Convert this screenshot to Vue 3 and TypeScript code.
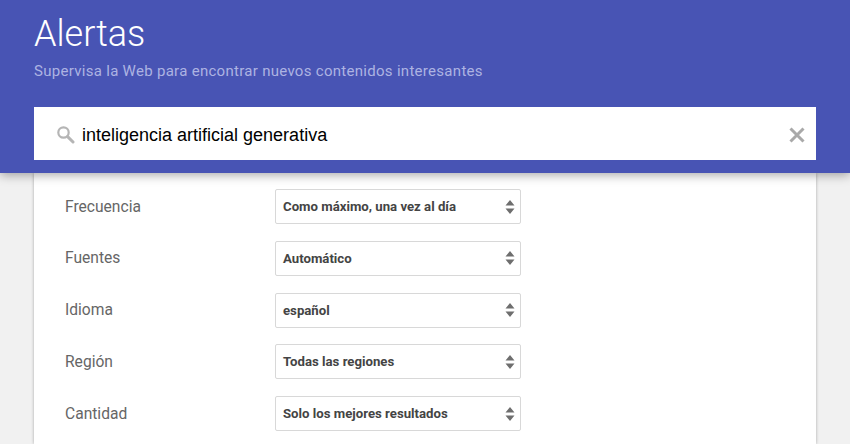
<script setup lang="ts">
const rows: { label: string; value: string }[] = [
  { label: 'Frecuencia', value: 'Como máximo, una vez al día' },
  { label: 'Fuentes', value: 'Automático' },
  { label: 'Idioma', value: 'español' },
  { label: 'Región', value: 'Todas las regiones' },
  { label: 'Cantidad', value: 'Solo los mejores resultados' },
]
</script>

<template>
  <div class="page">
    <header class="header">
      <h1 class="title">Alertas</h1>
      <p class="subtitle">Supervisa la Web para encontrar nuevos contenidos interesantes</p>
      <div class="search">
        <svg class="search-icon" width="19" height="19" viewBox="0 0 19 19" fill="none">
          <circle cx="7.5" cy="7.5" r="5.2" stroke="#b5b5b5" stroke-width="2.2" />
          <path d="M11.6 11.6 L17 17" stroke="#b5b5b5" stroke-width="3" stroke-linecap="round" />
        </svg>
        <span class="query">inteligencia artificial generativa</span>
        <svg class="clear" width="16" height="16" viewBox="0 0 16 16" fill="none">
          <path d="M1.5 1.5 L14.5 14.5 M14.5 1.5 L1.5 14.5" stroke="#a9a9a9" stroke-width="3" />
        </svg>
      </div>
    </header>
    <main class="card">
      <div v-for="row in rows" :key="row.label" class="row">
        <span class="label">{{ row.label }}</span>
        <div class="select">
          <span>{{ row.value }}</span>
          <svg class="arrows" width="10" height="14" viewBox="0 0 10 14">
            <path d="M5 0 L9.5 5.5 H0.5 Z M5 14 L0.5 8.5 H9.5 Z" fill="#6e6e6e" />
          </svg>
        </div>
      </div>
    </main>
  </div>
</template>

<style>
html, body { margin: 0; background: #f1f1f1; }
</style>

<style scoped>
.page {
  height: 444px;
  overflow: hidden;
  background: #f1f1f1;
  font-family: Roboto, sans-serif;
}
.header {
  position: relative;
  z-index: 1;
  box-sizing: border-box;
  height: 173px;
  padding: 13px 34px 0;
  background: #4854b4;
  box-shadow: 0 2px 10px rgba(0, 0, 0, 0.35);
}
.title {
  margin: 0;
  font-size: 36px;
  line-height: 42px;
  font-weight: 300;
  color: #fff;
}
.subtitle {
  margin: 6px 0 0;
  font-size: 15px;
  line-height: 20px;
  letter-spacing: 0.29px;
  color: #adb3e2;
}
.search {
  box-sizing: border-box;
  display: flex;
  align-items: center;
  height: 53px;
  margin-top: 26px;
  padding: 2px 11px 0 22px;
  background: #fff;
}
.search-icon { flex: none; margin-right: 7px; }
.query {
  flex: 1;
  padding-top: 1px;
  font-family: "Liberation Sans", Arial, sans-serif;
  font-size: 18px;
  color: #000;
}
.clear { flex: none; }
.card {
  box-sizing: border-box;
  width: 782px;
  height: 271px;
  margin-left: 34px;
  padding-top: 16px;
  background: #fff;
  box-shadow: 0 0 3px rgba(0, 0, 0, 0.3);
}
.row {
  display: flex;
  align-items: center;
  height: 35px;
  margin-bottom: 16.75px;
  padding-left: 31px;
}
.label {
  width: 210px;
  font-size: 15.6px;
  color: #666;
}
.select {
  box-sizing: border-box;
  display: flex;
  align-items: center;
  justify-content: space-between;
  width: 246px;
  height: 35px;
  padding: 0 5px 0 7px;
  border: 1px solid #d8d8d8;
  border-radius: 2px;
  font-size: 13.2px;
  font-weight: 700;
  color: #444;
}
</style>
